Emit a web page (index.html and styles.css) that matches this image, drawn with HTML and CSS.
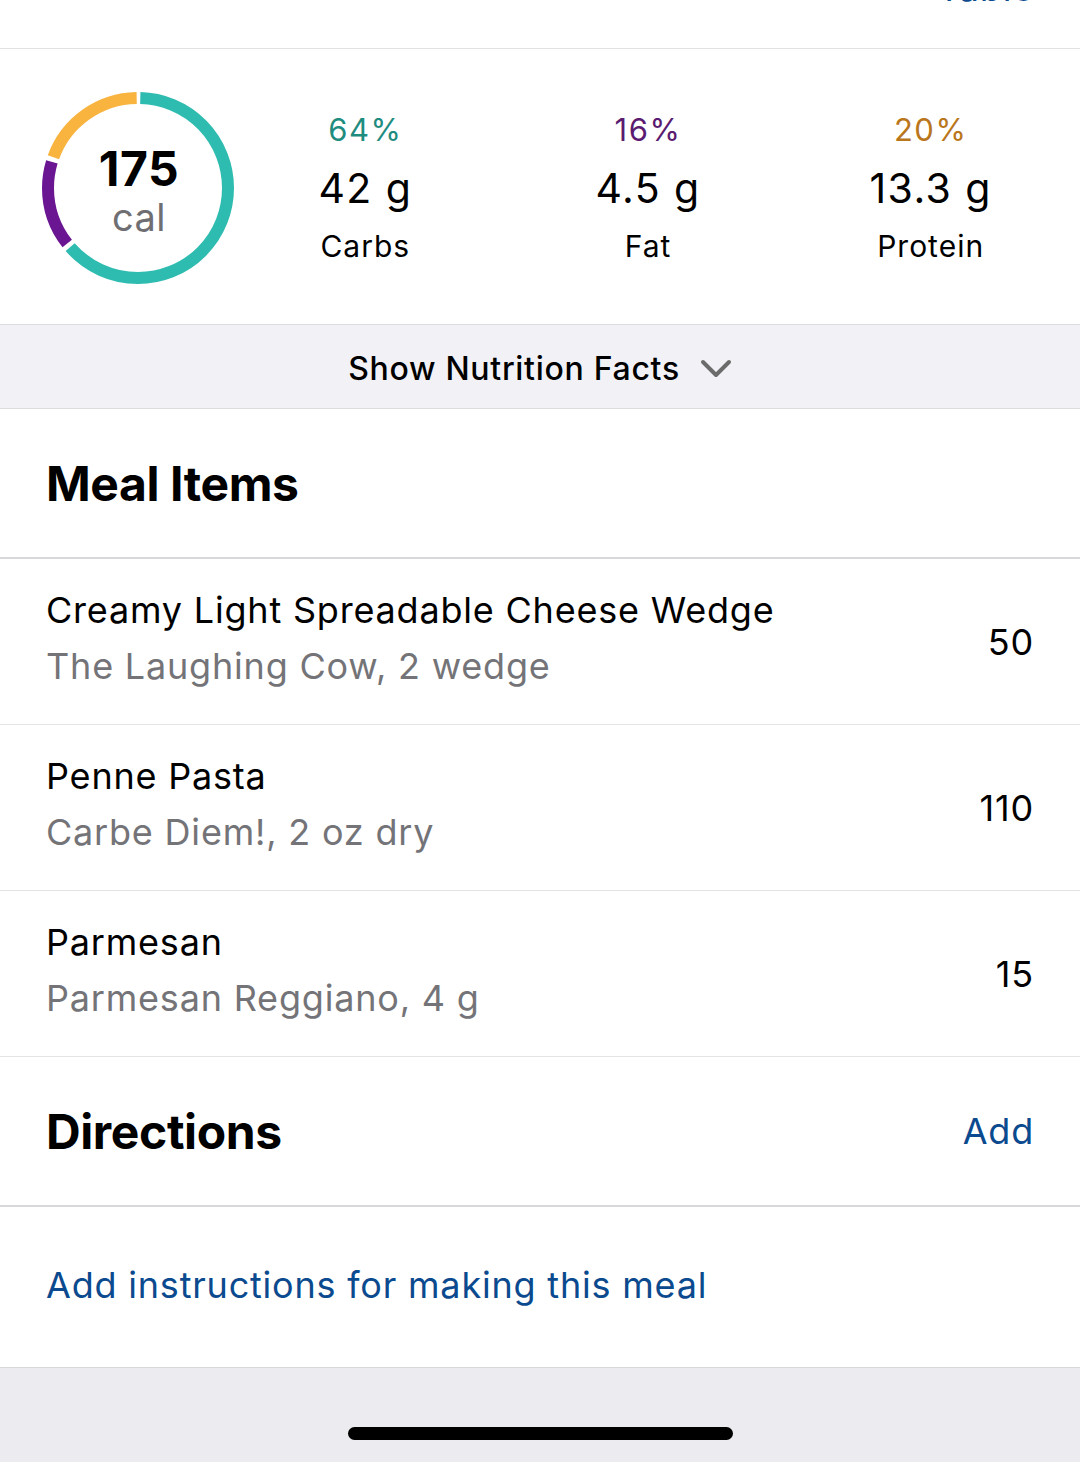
FILE: index.html
```html
<!DOCTYPE html>
<html lang="en">
<head>
<meta charset="utf-8">
<title>Meal</title>
<link rel="stylesheet" href="styles.css">
</head>
<body>
<div class="screen">
  <header class="topbar">
    <span class="topbar-action">+ Table</span>
  </header>

  <section class="summary">
    <div class="ring">
      <svg class="ring-svg" width="192" height="192" viewBox="0 0 192 192">
        <g transform="rotate(-90 96 96)">
          <circle cx="96" cy="96" r="90" fill="none" stroke="#2fbcb0" stroke-width="12" stroke-dasharray="356.6 600" stroke-dashoffset="-2.36"/>
          <circle cx="96" cy="96" r="90" fill="none" stroke="#6a1592" stroke-width="12" stroke-dasharray="86.4 600" stroke-dashoffset="-363.6"/>
          <circle cx="96" cy="96" r="90" fill="none" stroke="#f9b33f" stroke-width="12" stroke-dasharray="108.4 600" stroke-dashoffset="-454.8"/>
        </g>
      </svg>
      <div class="ring-label">
        <span class="ring-value">175</span>
        <span class="ring-unit">cal</span>
      </div>
    </div>
    <div class="macro">
      <span class="macro-pct pct-carbs">64%</span>
      <span class="macro-val">42 g</span>
      <span class="macro-name">Carbs</span>
    </div>
    <div class="macro">
      <span class="macro-pct pct-fat">16%</span>
      <span class="macro-val">4.5 g</span>
      <span class="macro-name">Fat</span>
    </div>
    <div class="macro">
      <span class="macro-pct pct-protein">20%</span>
      <span class="macro-val">13.3 g</span>
      <span class="macro-name">Protein</span>
    </div>
  </section>

  <button class="facts-toggle" type="button">
    <span>Show Nutrition Facts</span>
    <svg class="chev" width="32" height="20" viewBox="0 0 32 20"><path d="M3 3 L16 16 L29 3" fill="none" stroke="#6b6b6b" stroke-width="4" stroke-linecap="round" stroke-linejoin="round"/></svg>
  </button>

  <h2 class="section-head">Meal Items</h2>

  <ul class="items">
    <li class="item">
      <div class="item-text">
        <span class="item-name">Creamy Light Spreadable Cheese Wedge</span>
        <span class="item-sub">The Laughing Cow, 2 wedge</span>
      </div>
      <span class="item-cal">50</span>
    </li>
    <li class="item">
      <div class="item-text">
        <span class="item-name">Penne Pasta</span>
        <span class="item-sub">Carbe Diem!, 2 oz dry</span>
      </div>
      <span class="item-cal">110</span>
    </li>
    <li class="item">
      <div class="item-text">
        <span class="item-name">Parmesan</span>
        <span class="item-sub">Parmesan Reggiano, 4 g</span>
      </div>
      <span class="item-cal">15</span>
    </li>
  </ul>

  <div class="section-head directions-head">
    <h2 class="section-title">Directions</h2>
    <a class="link add-link">Add</a>
  </div>

  <div class="instructions">
    <a class="link">Add instructions for making this meal</a>
  </div>

  <footer class="home-area">
    <div class="home-indicator"></div>
  </footer>
</div>
</body>
</html>
```

FILE: styles.css
```css
* { box-sizing: border-box; }

html, body {
  margin: 0;
  padding: 0;
  background: #ffffff;
}

body {
  font-family: "Inter", "Roboto", "Liberation Sans", sans-serif;
  color: #000;
  width: 1080px;
  height: 1462px;
  overflow: hidden;
}

.screen {
  display: flex;
  flex-direction: column;
  height: 1462px;
}

.topbar {
  height: 49px;
  flex: none;
  border-bottom: 1px solid #e2e2e4;
  overflow: hidden;
  display: flex;
  justify-content: flex-end;
  padding-right: 46px;
}

.topbar-action {
  font-size: 36px;
  line-height: 36px;
  letter-spacing: 0.8px;
  color: #0b4a8e;
  margin-top: -30px;
}

.summary {
  display: grid;
  grid-template-columns: 182px 1fr 1fr 1fr;
  padding: 43px 8px 40px 42px;
  border-bottom: 1px solid #dcdcdf;
}

.ring {
  position: relative;
  width: 192px;
  height: 192px;
}

.ring-svg { display: block; }

.ring-label {
  position: absolute;
  inset: 0;
  display: flex;
  flex-direction: column;
  align-items: center;
  justify-content: center;
  padding-top: 6px;
  padding-left: 2px;
}

.ring-value {
  font-size: 48px;
  font-weight: 700;
  line-height: 52px;
  letter-spacing: 0.5px;
}

.ring-unit {
  font-size: 38px;
  line-height: 44px;
  letter-spacing: 0.5px;
  color: #6f6f73;
}

.macro {
  display: flex;
  flex-direction: column;
  align-items: center;
  padding-top: 18px;
}

.macro-pct {
  font-size: 31px;
  line-height: 40px;
  letter-spacing: 1.5px;
}

.pct-carbs { color: #1f8c80; }
.pct-fat { color: #5a1b70; }
.pct-protein { color: #b9761c; }

.macro-val {
  font-size: 41px;
  line-height: 56px;
  letter-spacing: 1.4px;
  margin-top: 10px;
}

.macro-name {
  font-size: 30px;
  line-height: 40px;
  letter-spacing: 1px;
  margin-top: 10px;
}

.facts-toggle {
  height: 84px;
  flex: none;
  border: 0;
  border-bottom: 1px solid #dcdcdf;
  background: #f2f2f6;
  display: flex;
  align-items: center;
  justify-content: center;
  gap: 20px;
  font-family: inherit;
  font-size: 32px;
  font-weight: 500;
  letter-spacing: 0.7px;
  color: #000;
  padding: 4px 0 0 0;
}

.chev { display: block; margin-top: 0; }

.section-head {
  margin: 0;
  height: 150px;
  flex: none;
  display: flex;
  align-items: center;
  padding: 0 46px 0 46px;
  font-size: 48px;
  font-weight: 700;
  letter-spacing: -0.4px;
  border-bottom: 2px solid #d8d8da;
}

.directions-head {
  justify-content: space-between;
}

.section-title {
  margin: 0;
  font-size: 48px;
  font-weight: 700;
  letter-spacing: -0.4px;
}

.items {
  list-style: none;
  margin: 0;
  padding: 0;
}

.item {
  height: 166px;
  border-bottom: 1px solid #e4e4e6;
  display: flex;
  align-items: center;
  justify-content: space-between;
  padding: 0 46px 0 46px;
}

.item-text {
  display: flex;
  flex-direction: column;
  gap: 12px;
  padding-bottom: 8px;
}

.item-name,
.item-sub,
.item-cal {
  font-size: 36px;
  line-height: 44px;
  letter-spacing: 0.8px;
}

.item-sub { color: #747478; }

.link {
  color: #0b4a8e;
  text-decoration: none;
  font-size: 36px;
  font-weight: 400;
  letter-spacing: 0.8px;
}

.instructions {
  height: 161px;
  flex: none;
  display: flex;
  align-items: center;
  padding: 0 46px 4px;
  border-bottom: 1px solid #d8d8da;
}

.home-area {
  flex: 1;
  background: #ebebf0;
  display: flex;
  justify-content: center;
  padding-top: 59px;
}

.home-indicator {
  width: 385px;
  height: 13px;
  border-radius: 7px;
  background: #000;
}
```
